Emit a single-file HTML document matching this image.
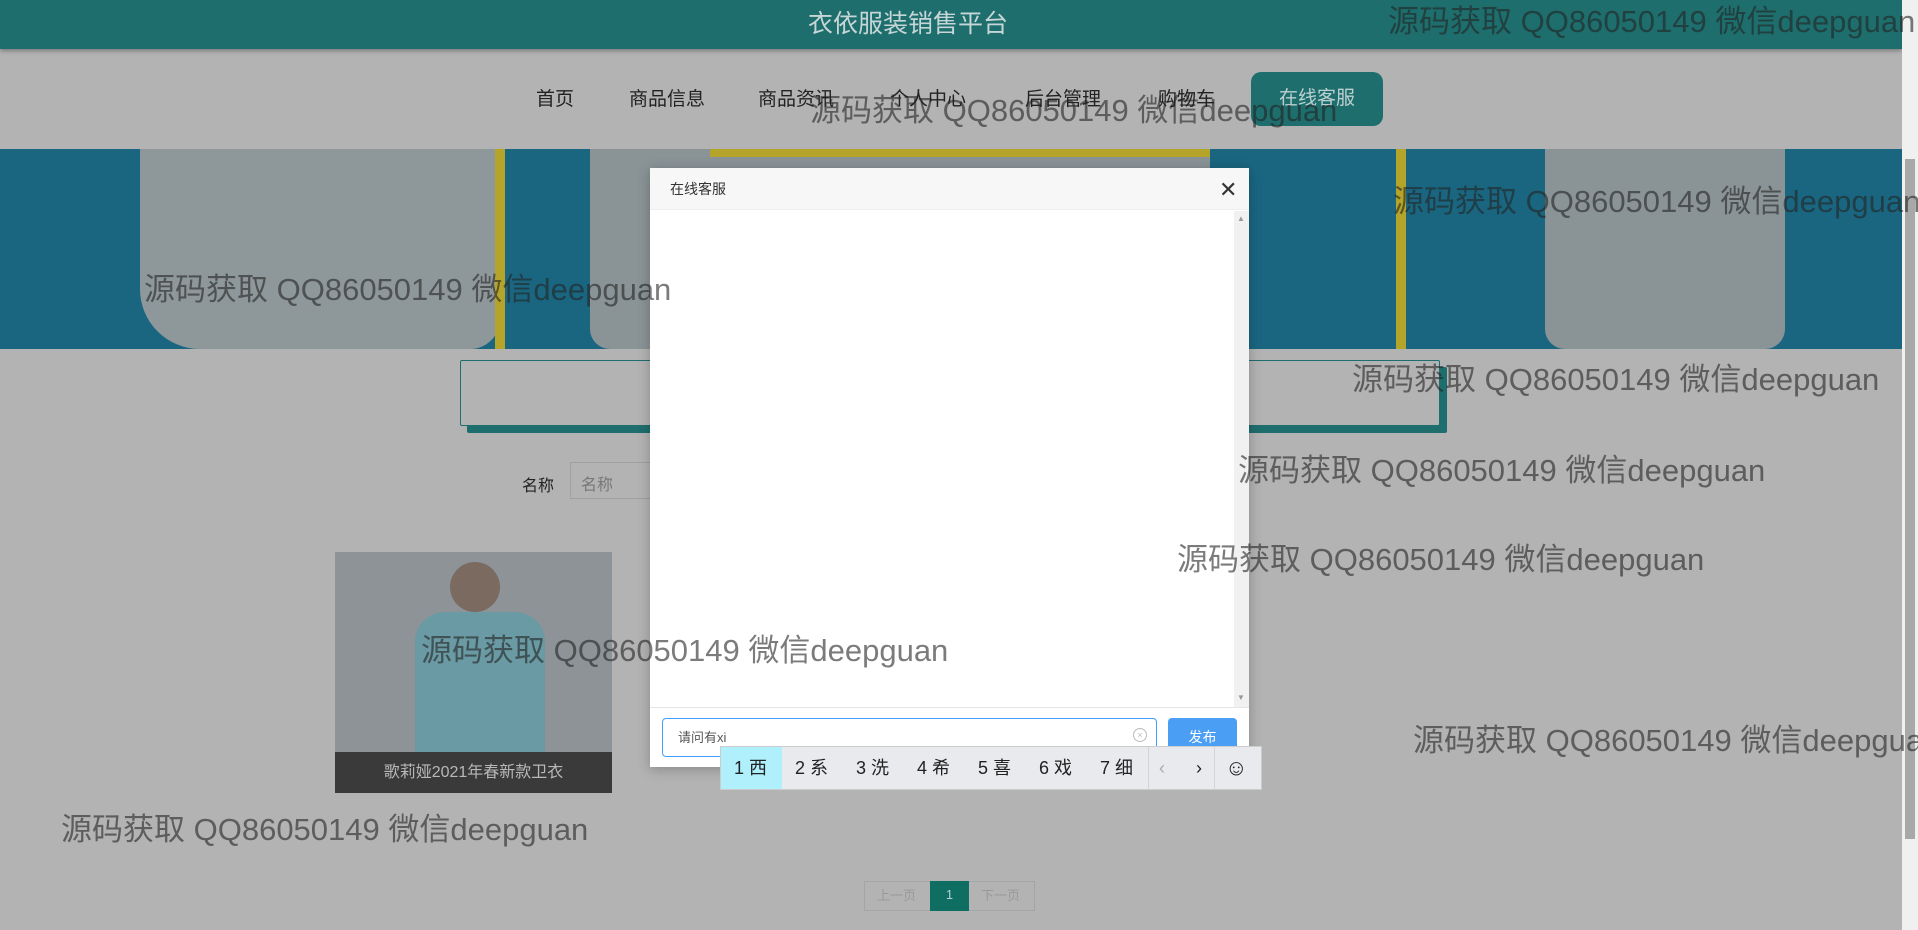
<!DOCTYPE html>
<html><head><meta charset="utf-8"><style>
*{margin:0;padding:0;box-sizing:border-box}
body{width:1918px;height:930px;overflow:hidden;background:#b3b3b3;font-family:"Liberation Sans","Noto Sans CJK SC",sans-serif;position:relative}
.abs{position:absolute}
.top{left:0;top:0;width:1902px;height:49px;background:#1e6e6e;box-shadow:0 2px 4px rgba(0,0,0,.3);color:#c6d6d6;font-size:25px;text-align:center;line-height:49px;padding-right:86px}
.nav{font-size:19px;color:#222;top:84px}
.btn{left:1251px;top:72px;width:132px;height:54px;background:#1e6e6e;border-radius:10px;color:#bcd0d0;font-size:19px;line-height:54px;text-align:center}
.banner{left:0;top:149px;width:1902px;height:200px;background:#1a6680;overflow:hidden}
.wm{font-size:31px;color:rgba(35,35,35,.6);white-space:nowrap;z-index:50;line-height:1}
.modal{left:650px;top:168px;width:599px;height:599px;background:#fff;box-shadow:0 2px 12px rgba(0,0,0,.25);z-index:10}
</style></head><body>
<div class="abs top">衣依服装销售平台</div>
<div class="abs nav" style="left:536px">首页</div>
<div class="abs nav" style="left:629px">商品信息</div>
<div class="abs nav" style="left:758px">商品资讯</div>
<div class="abs nav" style="left:890px">个人中心</div>
<div class="abs nav" style="left:1025px">后台管理</div>
<div class="abs nav" style="left:1158px">购物车</div>
<div class="abs btn">在线客服</div>

<div class="abs banner">
 <div class="abs" style="left:140px;top:0;width:360px;height:200px;background:#8e989b;border-radius:0 0 30px 60px"></div>
 <div class="abs" style="left:495px;top:-10px;width:10px;height:290px;background:#b5a42a"></div>
 <div class="abs" style="left:590px;top:0;width:620px;height:200px;background:#8a9497;border-radius:0 0 20px 20px"></div>
 <div class="abs" style="left:710px;top:0;width:500px;height:8px;background:#b5a42a"></div>
 <div class="abs" style="left:1396px;top:-10px;width:10px;height:290px;background:#b5a42a"></div>
 <div class="abs" style="left:1545px;top:0;width:240px;height:200px;background:#8a9497;border-radius:0 0 20px 20px"></div>
</div>

<div class="abs" style="left:460px;top:360px;width:980px;height:66px;border:1px solid #1e6e6e;box-shadow:7px 7px 0 #1e6e6e;background:#b3b3b3;border-radius:2px"></div>
<div class="abs" style="left:522px;top:472px;font-size:16px;color:#222">名称</div>
<div class="abs" style="left:570px;top:462px;width:200px;height:37px;border:1px solid #a0a0a0;background:#b3b3b3;font-size:16px;color:#777;padding:8px 10px">名称</div>

<div class="abs" style="left:335px;top:552px;width:277px;height:241px;background:#8d9396">
 <div class="abs" style="left:80px;top:60px;width:130px;height:140px;background:#6a9aa3;border-radius:30px 30px 0 0"></div>
 <div class="abs" style="left:115px;top:10px;width:50px;height:50px;background:#7a6a60;border-radius:50%"></div>
 <div class="abs" style="left:0;top:200px;width:277px;height:41px;background:#3a3a3a;color:#b8b8b8;font-size:16px;text-align:center;line-height:41px">歌莉娅2021年春新款卫衣</div>
</div>

<div class="abs" style="left:864px;top:881px;width:171px;height:30px;border:1px solid #a5a5a5;font-size:13px;color:#999;line-height:28px">
 <span class="abs" style="left:12px">上一页</span>
 <span class="abs" style="left:65px;top:-1px;width:39px;height:30px;background:#0f6e62;color:#bcd;text-align:center">1</span>
 <span class="abs" style="left:116px">下一页</span>
</div>

<div class="abs modal">
 <div class="abs" style="left:0;top:0;width:599px;height:42px;background:#f7f7f7;border-bottom:1px solid #eee;font-size:14px;color:#333;line-height:42px;padding-left:20px">在线客服</div>
 <div class="abs" style="left:569px;top:9px;font-size:22px;color:#333">✕</div>
 <div class="abs" style="left:584px;top:43px;width:15px;height:496px;background:#f1f1f1"></div>
 <div class="abs" style="left:587px;top:46px;font-size:8px;color:#999">▲</div>
 <div class="abs" style="left:587px;top:525px;font-size:8px;color:#999">▼</div>
 <div class="abs" style="left:0;top:539px;width:599px;height:1px;background:#e5e5e5"></div>
 <div class="abs" style="left:12px;top:550px;width:495px;height:39px;border:1px solid #409eff;border-radius:4px;font-size:13px;color:#555;line-height:37px;padding-left:15px">请问有xi</div>
 <div class="abs" style="left:483px;top:560px;width:14px;height:14px;border:1px solid #bbb;border-radius:50%;font-size:9px;color:#bbb;text-align:center;line-height:12px">×</div>
 <div class="abs" style="left:518px;top:550px;width:69px;height:39px;background:#4a9ff5;border-radius:4px;color:#fff;font-size:14px;text-align:center;line-height:39px">发布</div>
</div>

<div class="abs" style="left:720px;top:746px;width:542px;height:44px;background:#e8eaee;border:1px solid #ccc;z-index:20;font-size:18px;color:#222;line-height:42px">
 <span class="abs" style="left:0;top:0;width:61px;height:42px;background:#b0f0fc"></span>
 <span class="abs" style="left:13px">1 西</span>
 <span class="abs" style="left:74px">2 系</span>
 <span class="abs" style="left:135px">3 洗</span>
 <span class="abs" style="left:196px">4 希</span>
 <span class="abs" style="left:257px">5 喜</span>
 <span class="abs" style="left:318px">6 戏</span>
 <span class="abs" style="left:379px">7 细</span>
 <span class="abs" style="left:427px;top:0;width:1px;height:42px;background:#d4d4d4"></span>
 <span class="abs" style="left:438px;color:#aaa">‹</span>
 <span class="abs" style="left:475px">›</span>
 <span class="abs" style="left:493px;top:0;width:1px;height:42px;background:#d4d4d4"></span>
 <span class="abs" style="left:504px;font-size:22px">☺</span>
</div>

<div class="abs" style="left:1902px;top:0;width:16px;height:930px;background:#f0f0f0"></div>
<div class="abs" style="left:1905px;top:159px;width:10px;height:680px;background:#a8a8a8"></div>

<div class="abs wm" style="left:1388px;top:6px">源码获取 QQ86050149 微信deepguan</div>
<div class="abs wm" style="left:810px;top:95px">源码获取 QQ86050149 微信deepguan</div>
<div class="abs wm" style="left:1393px;top:186px">源码获取 QQ86050149 微信deepguan</div>
<div class="abs wm" style="left:144px;top:274px">源码获取 QQ86050149 微信deepguan</div>
<div class="abs wm" style="left:1352px;top:364px">源码获取 QQ86050149 微信deepguan</div>
<div class="abs wm" style="left:1238px;top:455px">源码获取 QQ86050149 微信deepguan</div>
<div class="abs wm" style="left:1177px;top:544px">源码获取 QQ86050149 微信deepguan</div>
<div class="abs wm" style="left:421px;top:635px">源码获取 QQ86050149 微信deepguan</div>
<div class="abs wm" style="left:1413px;top:725px">源码获取 QQ86050149 微信deepguan</div>
<div class="abs wm" style="left:61px;top:814px">源码获取 QQ86050149 微信deepguan</div>
</body></html>
